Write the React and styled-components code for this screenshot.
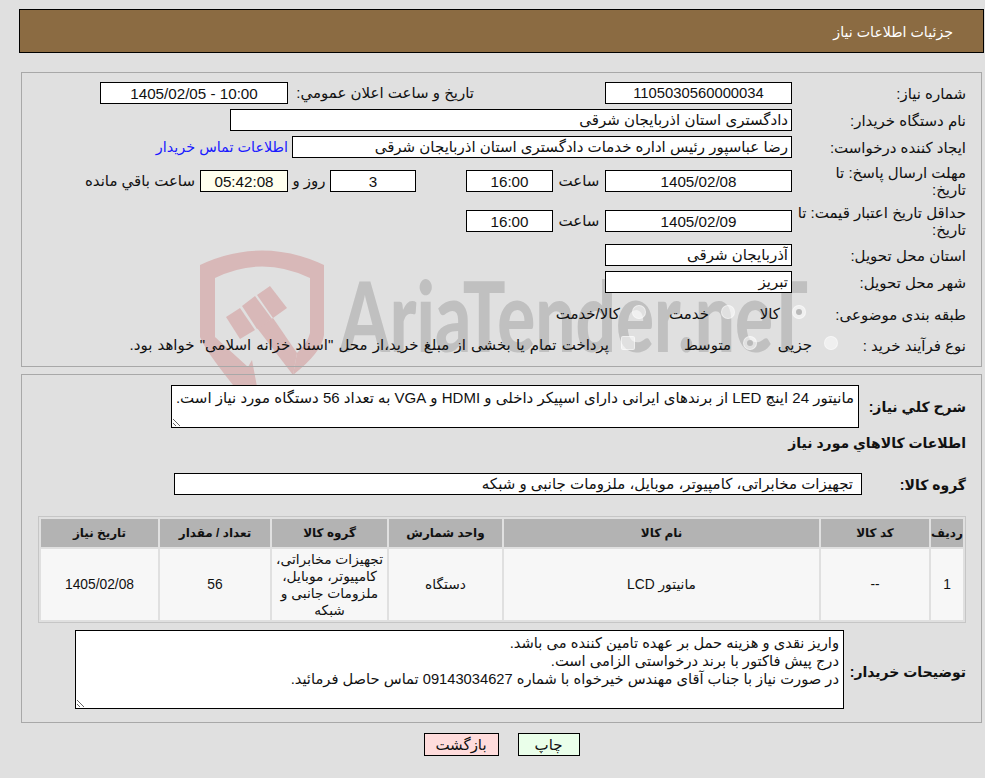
import React from 'react'
import styled, { createGlobalStyle } from 'styled-components'

const FONT = '"Liberation Sans", "DejaVu Sans", sans-serif'

const GlobalStyle = createGlobalStyle`
  html, body {
    margin: 0;
    padding: 0;
    background: #e0e0e0;
  }
  body {
    font-family: ${FONT};
    font-size: 15px;
    color: #111;
  }
`
const Page = styled.div`
  position: relative;
  direction: rtl;
  width: 985px;
  height: 778px;
  overflow: hidden;
  padding-top: 9px;
  box-sizing: border-box;
`
const Header = styled.div`
  position: relative;
  z-index: 1;
  height: 44px;
  margin: 0 1px 19px 19px;
  padding-right: 30px;
  border: 1px solid #000;
  box-sizing: border-box;
  background: #8b6b42;
  color: #fff;
  line-height: 44px;
  font-size: 14.2px;
`
const Watermark = styled.svg`
  position: absolute;
  left: 0;
  top: 0;
  z-index: 0;
  pointer-events: none;
`
const Panel = styled.section`
  position: relative;
  z-index: 1;
  margin: 0 3px 7px 21px;
  border: 1px solid #a8a8a8;
  box-sizing: border-box;
  padding: ${p => p.$padding};
  height: ${p => p.$height}px;
`
const Row = styled.div`
  display: flex;
  align-items: center;
  height: ${p => p.$height || 22}px;
  margin-bottom: ${p => (p.$gap === undefined ? 5 : p.$gap)}px;
`
const Label = styled.label`
  flex: none;
  width: ${p => p.$width || 174}px;
  line-height: 17px;
  padding-left: 4px;
  box-sizing: border-box;
`
const Text = styled.span`
  flex: none;
  width: ${p => (p.$width ? `${p.$width}px` : 'auto')};
  margin-right: ${p => p.$start || 0}px;
  text-align: ${p => p.$align || 'right'};
  white-space: nowrap;
`
const Link = styled.a`
  flex: none;
  margin-right: 4px;
  color: #1a1aff;
  font-size: 14.4px;
  text-decoration: none;
`
const Field = styled.input`
  flex: none;
  width: ${p => p.$width}px;
  height: 22px;
  margin: 0;
  margin-right: ${p => p.$start || 0}px;
  padding: 0 3px;
  padding-right: ${p => p.$inset || 3}px;
  border: 1px solid #000;
  box-sizing: border-box;
  background: ${p => p.$bg || '#fff'};
  color: #111;
  font: ${p => p.$size || 15}px ${FONT};
  text-align: ${p => p.$align || 'right'};
  outline: none;
`
const Area = styled.textarea`
  display: block;
  flex: none;
  width: ${p => p.$width}px;
  height: ${p => p.$height}px;
  margin: 0;
  padding: 3px 4px 3px 0;
  border: 1px solid #000;
  box-sizing: border-box;
  background: #fff;
  color: #111;
  font: ${p => p.$size || 15}px/18px ${FONT};
  outline: none;
`
const Radio = styled.span`
  flex: none;
  position: relative;
  width: 14px;
  height: 14px;
  margin-bottom: 5px;
  box-sizing: border-box;
  border-radius: ${p => (p.$square ? '2px' : '50%')};
  border: 1px solid rgba(255, 255, 255, 0.45);
  background: rgba(255, 255, 255, 0.5);
  &::after {
    content: '';
    display: ${p => (p.$checked ? 'block' : 'none')};
    position: absolute;
    inset: 3px;
    border-radius: 50%;
    background: #b9b9b9;
  }
`
const OptionText = styled.span`
  flex: none;
  width: ${p => (p.$width ? `${p.$width}px` : 'auto')};
  padding-right: 12px;
  box-sizing: border-box;
  white-space: nowrap;
  word-spacing: ${p => p.$spread || 0}px;
`
const BoldLabel = styled(Label)`
  padding: ${p => p.$drop || 2}px 0 0 0;
  font-weight: bold;
  font-size: 14px;
  white-space: nowrap;
`
const Heading = styled.div`
  height: 20px;
  margin: 0 0 20px 0;
  line-height: 20px;
  font-weight: bold;
  font-size: 14px;
`
const Table = styled.table`
  table-layout: fixed;
  width: 928px;
  margin: 0 0 7px 0;
  border: 1px solid #c6c6c6;
  border-spacing: 2px;
`
const Th = styled.th`
  height: 28px;
  padding: 0;
  background: #b3b3b3;
  font-size: 12px;
  font-weight: bold;
  width: ${p => p.$width}px;
`
const Td = styled.td`
  height: 71px;
  padding: 0 3px;
  background: #f7f7f7;
  text-align: center;
  font-size: 13.8px;
  line-height: 17px;
`
const Buttons = styled.div`
  position: relative;
  z-index: 1;
  display: flex;
  justify-content: center;
  gap: 19px;
  margin-top: 10px;
  padding-left: 18px;
`
const Button = styled.button`
  height: 23px;
  width: ${p => p.$width}px;
  padding: 0;
  border: 1px solid #000;
  background: ${p => p.$bg};
  color: #111;
  font: 15px ${FONT};
`

const columns = [
  ['رديف', 32],
  ['کد کالا', 108],
  ['نام کالا', 315],
  ['واحد شمارش', 113],
  ['گروه کالا', 115],
  ['تعداد / مقدار', 110],
  ['تاريخ نياز', 117]
]

const cells = [
  '1',
  '--',
  'مانیتور LCD',
  'دستگاه',
  'تجهیزات مخابراتی، کامپیوتر، موبایل، ملزومات جانبی و شبکه',
  '56',
  '1405/02/08'
]

const notes = `واریز نقدی و هزینه حمل بر عهده تامین کننده می باشد.
درج پیش فاکتور با برند درخواستی الزامی است.
در صورت نیاز با جناب آقای مهندس خیرخواه با شماره 09143034627 تماس حاصل فرمائید.`

const Logo = () => (
  <Watermark width="985" height="440" viewBox="0 0 985 440">
    <g fill="#d8b8b8">
      <path d="M200 265 Q262 236 324 265 V335 Q322 352 293 375 L297 353 Q308 342 310 333 V278 Q262 255 215 278 V337 L248 367 L252 360 L258 392 L233 385 Q205 350 200 337 Z" />
      <path d="M257 328 L273 318 L297 353 L293 375 Z" />
      <path d="M226 317 L240 308 L255 330 L240 339 Z" />
      <path d="M242 306 L255 296 L272 319 L257 329 Z" />
      <path d="M257 295 L270 286 L287 308 L273 318 Z" />
    </g>
    <text
      x="340"
      y="352"
      fill="#c0c0c0"
      fontFamily="Lato, sans-serif"
      fontWeight="900"
      fontSize="98"
      textLength="468"
      lengthAdjust="spacingAndGlyphs"
      style={{ direction: 'ltr' }}
    >
      AriaTender.neT
    </text>
  </Watermark>
)

const App = () => {
  return (
    <Page>
      <GlobalStyle />
      <Logo />
      <Header>جزئیات اطلاعات نیاز</Header>

      <Panel $padding="9px 15px 0 0" $height={295}>
        <Row>
          <Label>شماره نیاز:</Label>
          <Field $width={187} $size={14.8} $align="center" readOnly defaultValue="1105030560000034" />
          <Text $start={131} $width={186}>تاریخ و ساعت اعلان عمومي:</Text>
          <Field $width={188} $size={15.2} $align="center" readOnly defaultValue="10:00 - 1405/02/05" />
        </Row>
        <Row>
          <Label>نام دستگاه خریدار:</Label>
          <Field $width={562} readOnly defaultValue="دادگستری استان اذربایجان شرقی" />
        </Row>
        <Row $gap={6}>
          <Label>ایجاد کننده درخواست:</Label>
          <Field $width={500} readOnly defaultValue="رضا عباسپور رئیس اداره خدمات دادگستری استان اذربایجان شرقی" />
          <Link href="#">اطلاعات تماس خریدار</Link>
        </Row>
        <Row $height={34} $gap={6}>
          <Label>مهلت ارسال پاسخ: تا<br />تاریخ:</Label>
          <Field $width={187} $size={15.2} $align="center" readOnly defaultValue="1405/02/08" />
          <Text $width={52} $align="center">ساعت</Text>
          <Field $width={87} $size={15.2} $align="center" readOnly defaultValue="16:00" />
          <Field $width={86} $size={15.2} $start={50} $align="center" readOnly defaultValue="3" />
          <Text $width={42} $align="center">روز و</Text>
          <Field $width={88} $size={15.2} $bg="#ffffee" $align="center" readOnly defaultValue="05:42:08" />
          <Text $start={5}>ساعت باقي مانده</Text>
        </Row>
        <Row $height={34} $gap={6}>
          <Label>حداقل تاریخ اعتبار قیمت: تا تاریخ:</Label>
          <Field $width={187} $size={15.2} $align="center" readOnly defaultValue="1405/02/09" />
          <Text $width={52} $align="center">ساعت</Text>
          <Field $width={87} $size={15.2} $align="center" readOnly defaultValue="16:00" />
        </Row>
        <Row>
          <Label>استان محل تحویل:</Label>
          <Field $width={187} readOnly defaultValue="آذربایجان شرقی" />
        </Row>
        <Row>
          <Label>شهر محل تحویل:</Label>
          <Field $width={187} readOnly defaultValue="تبریز" />
        </Row>
        <Row $height={32} $gap={0}>
          <Label $width={160}>طبقه بندی موضوعی:</Label>
          <Radio $checked />
          <OptionText $width={57}>کالا</OptionText>
          <Radio />
          <OptionText $width={75}>خدمت</OptionText>
          <Radio />
          <OptionText>کالا/خدمت</OptionText>
        </Row>
        <Row $height={30} $gap={0}>
          <Label $width={128}>نوع فرآیند خرید :</Label>
          <Radio />
          <OptionText $width={67}>جزیی</OptionText>
          <Radio $checked />
          <OptionText $width={108}>متوسط</OptionText>
          <Radio $square />
          <OptionText $spread={1}>پرداخت تمام یا بخشی از مبلغ خرید،از محل "اسناد خزانه اسلامی" خواهد بود.</OptionText>
        </Row>
      </Panel>

      <Panel $padding="10px 15px 0 0" $height={349}>
        <Row $height={43} $gap={5}>
          <BoldLabel $width={107}>شرح كلي نياز:</BoldLabel>
          <Area
            $width={688}
            $height={43}
            readOnly
            defaultValue="مانیتور 24 اینچ LED از برندهای ایرانی دارای اسپیکر داخلی و HDMI و VGA به تعداد 56 دستگاه مورد نیاز است."
          />
        </Row>
        <Heading>اطلاعات كالاهاي مورد نياز</Heading>
        <Row $gap={21}>
          <BoldLabel $width={104}>گروه کالا:</BoldLabel>
          <Field
            $width={688}
            $inset={8}
            readOnly
            defaultValue="تجهیزات مخابراتی، کامپیوتر، موبایل، ملزومات جانبی و شبکه"
          />
        </Row>
        <Table>
          <thead>
            <tr>
              {columns.map(([title, width]) => (
                <Th key={title} $width={width}>{title}</Th>
              ))}
            </tr>
          </thead>
          <tbody>
            <tr>
              {cells.map(cell => (
                <Td key={cell}>{cell}</Td>
              ))}
            </tr>
          </tbody>
        </Table>
        <Row $height={79} $gap={0}>
          <BoldLabel $width={122} $drop={5}>توضیحات خریدار:</BoldLabel>
          <Area $width={769} $height={79} $size={14.7} readOnly defaultValue={notes} />
        </Row>
      </Panel>

      <Buttons>
        <Button $width={62} $bg="#eaffea">چاپ</Button>
        <Button $width={75} $bg="#ffdcdc">بازگشت</Button>
      </Buttons>
    </Page>
  )
}

export default App
